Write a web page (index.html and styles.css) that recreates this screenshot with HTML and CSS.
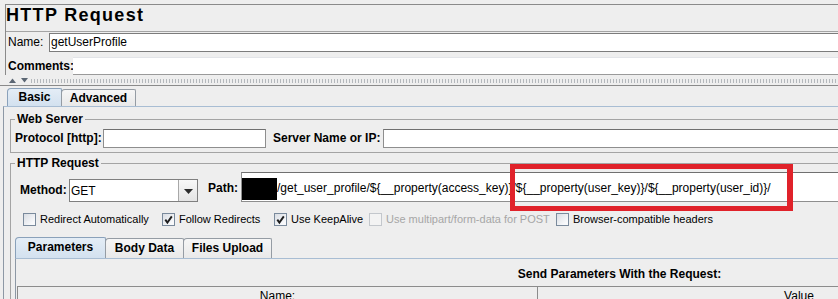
FILE: index.html
```html
<!DOCTYPE html>
<html>
<head>
<meta charset="utf-8">
<link rel="stylesheet" href="styles.css">
</head>
<body>
<div class="app">
  <div class="top">
    <div class="title">HTTP Request</div>
    <div class="frow name-row"><span class="lbl name-lbl">Name:</span><div class="tf name-tf">getUserProfile</div></div>
    <div class="frow cmt-row"><span class="lbl cmt-lbl">Comments:</span><div class="tf cmt-tf"></div></div>
  </div>
  <div class="divider">
    <svg class="arrows" width="20" height="5" viewBox="0 0 20 5"><path d="M0 5 L3.5 0.5 L7 5Z"/><path d="M12 0 L19 0 L15.5 4.5Z"/></svg>
    <div class="dots"></div>
  </div>
  <div class="tabs tabs1">
    <div class="tab sel t-basic">Basic</div>
    <div class="tab t-adv">Advanced</div>
  </div>
  <div class="tabpanel">
    <fieldset class="group ws">
      <legend>Web Server</legend>
      <div class="ws-row">
        <span class="blbl prot-lbl">Protocol [http]:</span>
        <div class="tf prot-tf"></div>
        <span class="blbl srv-lbl">Server Name or IP:</span>
        <div class="tf srv-tf"></div>
      </div>
    </fieldset>
    <fieldset class="group hr">
      <legend>HTTP Request</legend>
      <div class="mp-row">
        <span class="blbl method-lbl">Method:</span>
        <div class="combo"><span class="combo-val">GET</span><span class="combo-btn"><svg width="9" height="5" viewBox="0 0 9 5"><path d="M0 0 L9 0 L4.5 5Z"/></svg></span></div>
        <span class="blbl path-lbl">Path:</span>
        <div class="tf path-tf"><span class="redact"></span><span class="path-text">/get_user_profile/${__property(access_key)}/${__property(user_key)}/${__property(user_id)}/</span></div>
      </div>
      <div class="cb-row">
        <div class="cb"><span class="box"></span><span>Redirect Automatically</span></div>
        <div class="cb"><span class="box"><svg width="11" height="11" viewBox="0 0 11 11"><path d="M2.3 5.6 L4.4 8.6 L8.8 2.4"/></svg></span><span>Follow Redirects</span></div>
        <div class="cb"><span class="box"><svg width="11" height="11" viewBox="0 0 11 11"><path d="M2.3 5.6 L4.4 8.6 L8.8 2.4"/></svg></span><span>Use KeepAlive</span></div>
        <div class="cb disabled"><span class="box"></span><span>Use multipart/form-data for POST</span></div>
        <div class="cb"><span class="box"></span><span>Browser-compatible headers</span></div>
      </div>
      <div class="tabs tabs2">
        <div class="tab sel t-params">Parameters</div>
        <div class="tab t-body">Body Data</div>
        <div class="tab t-files">Files Upload</div>
      </div>
      <div class="param-panel">
        <div class="send">Send Parameters With the Request:</div>
        <div class="thead"><div class="th c1">Name:</div><div class="th c2">Value</div></div>
      </div>
    </fieldset>
  </div>
  <div class="annot"></div>
</div>
</body>
</html>
```

FILE: styles.css
```css
* { box-sizing: border-box; margin: 0; padding: 0; }
html, body { width: 838px; height: 299px; overflow: hidden; }
body {
  background: #eeeeee;
  font-family: "Liberation Sans", Arial, sans-serif;
  font-size: 12px;
  color: #000;
}
.app { width: 1240px; padding-top: 4px; position: relative; }

/* top name/comments panel */
.top {
  margin-left: 5px;
  border-top: 1px solid #8a8a8a;
  border-left: 1px solid #8a8a8a;
}
.title {
  height: 27px;
  line-height: 21px;
  font-size: 18px;
  font-weight: bold;
  letter-spacing: 1.3px;
  border-bottom: 1px solid #a4a4a4;
}
.frow { display: flex; }
.name-row { margin-top: 1px; height: 19px; }
.cmt-row { margin-top: 5px; height: 18px; }
.lbl { padding-left: 2px; white-space: nowrap; }
.name-lbl { width: 43px; line-height: 19px; }
.cmt-lbl { width: 67px; line-height: 18px; font-weight: bold; }
.tf { background: #fff; white-space: nowrap; overflow: hidden; }
.name-tf {
  flex: 1;
  border-top: 1px solid #7c7c7c;
  border-bottom: 1px solid #7c7c7c;
  border-left: 1px solid #7c7c7c;
  padding-left: 1px;
  line-height: 17px;
}
.cmt-tf {
  flex: 1;
  border-top: 1px solid #e2e4e8;
  border-bottom: 1px solid #9a9a9a;
}

/* split divider */
.divider {
  height: 11px;
  border-bottom: 1px solid #8a8a8a;
  display: flex;
  align-items: flex-start;
  padding-left: 9px;
  padding-top: 3px;
}
.arrows { fill: #5b6673; display: block; }
.dots {
  flex: 1;
  height: 4px;
  margin-top: 1px;
  margin-left: 1px;
  background-image: radial-gradient(circle, #b4b8bc 0.7px, transparent 0.9px);
  background-size: 3px 2px;
}

/* tabs */
.tabs { display: flex; align-items: flex-end; }
.tabs1 { height: 20px; padding-left: 7px; }
.tab {
  font-weight: bold;
  text-align: center;
  white-space: nowrap;
  border: 1px solid #959ca4;
  border-bottom: none;
  border-radius: 4px 2px 0 0;
  background: linear-gradient(#f6f6f6, #e9e9e9);
}
.tab.sel {
  background: linear-gradient(#e4edf6, #d3e1ef);
  border-color: #8aa1ba;
}
.tabs1 .tab { height: 17px; line-height: 16px; }
.tabs1 .tab.sel { height: 18px; line-height: 16px; }
.t-basic { width: 55px; }
.t-adv { width: 75px; margin-left: -1px; }

.tabpanel {
  margin-left: 3px;
  border-top: 1px solid #a8bdd3;
  border-left: 1px solid #8d98a5;
  padding: 5px 0 0 6px;
}

/* titled groups */
.group {
  min-width: 0;
  border: 1px solid #a4a4a4;
  border-right: none;
  padding: 0 0 0 4px;
}
.group legend {
  font-weight: bold;
  line-height: 14px;
  padding: 0 2px;
}
.ws { padding-top: 3px; padding-bottom: 4px; }
.ws-row { display: flex; height: 19px; align-items: center; }
.blbl { font-weight: bold; white-space: nowrap; }
.prot-lbl { width: 88px; line-height: 19px; }
.prot-tf, .srv-tf, .path-tf {
  border: 1px solid #8e8e8e;
  border-top-color: #707070;
}
.prot-tf { width: 163px; height: 19px; }
.srv-lbl { width: 110px; margin-left: 7px; line-height: 19px; }
.srv-tf { flex: 1; height: 19px; border-right: none; }

.hr { margin-top: 3px; padding-top: 2px; }
.mp-row { display: flex; align-items: flex-start; height: 30px; padding-left: 5px; }
.method-lbl { width: 49px; margin-top: 11px; line-height: 14px; }
.combo {
  width: 129px;
  height: 23px;
  margin-top: 7px;
  border: 1px solid #7f7f7f;
  background: #fff;
  display: flex;
}
.combo-val { flex: 1; line-height: 21px; padding-left: 1px; padding-top: 1px; }
.combo-btn {
  width: 19px;
  border-left: 1px solid #a8a8a8;
  background: linear-gradient(#f8f8f8, #e4e4e4);
  display: flex;
  align-items: center;
  justify-content: center;
}
.combo-btn svg { fill: #2b2b2b; display: block; margin-top: 1px; }
.path-lbl { width: 33px; margin-left: 10px; margin-top: 9px; line-height: 14px; }
.path-tf { flex: 1; height: 30px; border-right: none; display: flex; align-items: flex-start; }
.redact { width: 36px; height: 22px; margin-left: -1px; margin-top: 5px; background: #000; flex: none; }
.path-text { line-height: 28px; margin-top: 1px; }

/* checkboxes */
.cb-row {
  display: grid;
  grid-template-columns: 139px 112px 95px 187px auto;
  margin-top: 11px;
  padding-left: 8px;
  height: 13px;
  font-size: 11px;
  line-height: 13px;
}
.cb { display: flex; align-items: flex-start; white-space: nowrap; }
.box {
  width: 13px;
  height: 13px;
  margin-right: 4px;
  border: 1px solid #7a8a9c;
  background: linear-gradient(135deg, #d9dde3, #f8f9fb 80%);
  flex: none;
  display: flex;
}
.box svg path { fill: none; stroke: #1e1e1e; stroke-width: 1.9; }
.cb.disabled { color: #a6a6a6; }
.cb.disabled .box { border-color: #c3c7cc; background: #f3f3f3; }

/* parameters tabs */
.tabs2 { height: 21px; margin-top: 11px; }
.tabs2 .tab { height: 20px; line-height: 19px; }
.tabs2 .tab.sel { height: 21px; line-height: 19px; }
.t-params { width: 91px; }
.t-body { width: 79px; margin-left: -1px; }
.t-files { width: 89px; margin-left: -1px; }

.param-panel {
  width: 1208px;
  border-top: 1px solid #a8bdd3;
  border-left: 1px solid #8d98a5;
  padding-top: 8px;
  height: 60px;
}
.send { text-align: center; font-weight: bold; line-height: 14px; }
.thead {
  margin-top: 5px;
  margin-left: 1px;
  display: flex;
  border-top: 1px solid #8c8c8c;
  border-left: 1px solid #8c8c8c;
  height: 20px;
}
.th { line-height: 18px; text-align: center; }
.c1 { width: 520px; border-right: 1px solid #8c8c8c; }
.c2 { width: 522px; }

/* annotation */
.annot {
  position: absolute;
  left: 510px;
  top: 164px;
  width: 283px;
  height: 47px;
  border: 5px solid #e0222a;
  border-right-width: 6px;
}
```
